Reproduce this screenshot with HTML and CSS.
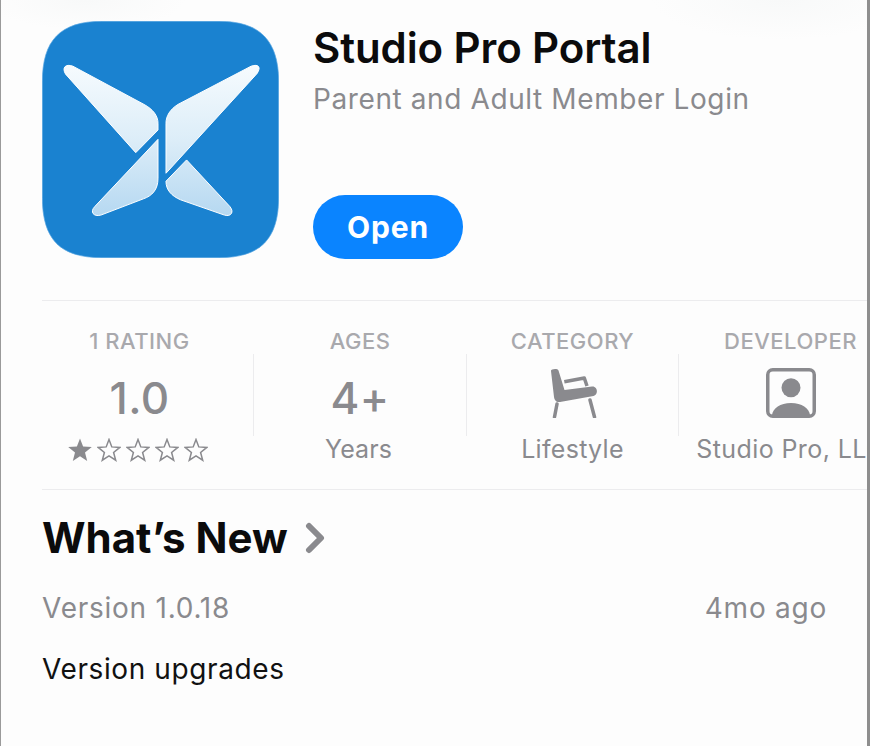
FILE: index.html
```html
<!DOCTYPE html>
<html lang="en">
<head>
<meta charset="utf-8">
<title>Studio Pro Portal</title>
<link rel="stylesheet" href="styles.css">
</head>
<body>
<main class="page">
  <header class="hero">
    <svg class="app-icon" viewBox="35 32 713 713" aria-label="App icon">
      <defs>
        <linearGradient id="wing" x1="0" y1="165" x2="0" y2="620" gradientUnits="userSpaceOnUse">
          <stop offset="0" stop-color="#f6fbfe"/>
          <stop offset="0.5" stop-color="#dcedf8"/>
          <stop offset="1" stop-color="#b5d8f1"/>
        </linearGradient>
      </defs>
      <path class="icon-tile" d="M36 215 C36 90 90 33 215 33 L568 33 C690 33 747 90 747 215 L747 562 C747 690 690 744 568 744 L215 744 C90 744 36 690 36 562 Z"/>
      <g fill="url(#wing)" stroke="#ffffff" stroke-width="3" stroke-linejoin="round">
        <path d="M106 192 C94 172 106 160 128 168 L342 283 C370 298 384 318 384 340 L384 360 L317 428 Z"/>
        <path d="M682 190 C694 172 688 160 664 168 L444 283 C420 298 408 318 408 340 L408 490 Z"/>
        <path d="M384 388 L384 505 C384 540 366 558 340 567 L212 616 C190 622 178 606 194 590 Z"/>
        <path d="M470 450 L600 590 C614 606 604 622 584 616 L452 570 C424 558 408 540 408 514 Z"/>
      </g>
    </svg>
    <div class="hero-text">
      <h1 class="title">Studio Pro Portal</h1>
      <p class="subtitle">Parent and Adult Member Login</p>
      <button class="open-btn" type="button">Open</button>
    </div>
  </header>

  <section class="stats">
    <div class="stat stat-first">
      <div class="stat-label">1 RATING</div>
      <div class="stat-value">1.0</div>
      <div class="stars">
        <svg class="star" viewBox="0 0 24 24"><path class="star-full" d="M12 0.500l3.100 8 8.700.6-6.800 5.500 2.200 8.400-7.200-4.700-7.200 4.700 2.200-8.400L.2 9.100l8.700-.6z"/></svg>
        <svg class="star" viewBox="0 0 24 24"><path class="star-empty" d="M12 1.500l2.800 7.400 8 .5-6.200 5.100 2.100 7.700-6.700-4.300-6.700 4.300 2.100-7.700-6.200-5.100 8-.5z"/></svg>
        <svg class="star" viewBox="0 0 24 24"><path class="star-empty" d="M12 1.500l2.800 7.400 8 .5-6.200 5.100 2.100 7.700-6.700-4.300-6.700 4.300 2.100-7.700-6.200-5.100 8-.5z"/></svg>
        <svg class="star" viewBox="0 0 24 24"><path class="star-empty" d="M12 1.500l2.800 7.400 8 .5-6.200 5.100 2.100 7.700-6.700-4.300-6.700 4.300 2.100-7.700-6.200-5.100 8-.5z"/></svg>
        <svg class="star" viewBox="0 0 24 24"><path class="star-empty" d="M12 1.500l2.800 7.400 8 .5-6.200 5.100 2.100 7.700-6.700-4.300-6.700 4.300 2.100-7.700-6.200-5.100 8-.5z"/></svg>
      </div>
    </div>
    <div class="stat">
      <div class="stat-label">AGES</div>
      <div class="stat-value">4+</div>
      <div class="stat-sub stat-sub-years">Years</div>
    </div>
    <div class="stat">
      <div class="stat-label">CATEGORY</div>
      <svg class="stat-icon" viewBox="0 0 50 50">
        <path class="chair-fill" d="M3 3 C2.500 1 9.500 0 10.500 2.500 L16.500 22 L44 18.500 C50 18 50.500 27 45.500 28 L12 34 C8 34.500 6.500 32 6 29 Z"/>
        <path class="chair-line" d="M16.300 13.700 L36.300 10 L39 18"/>
        <path class="chair-leg" d="M9 36 L6.500 49"/>
        <path class="chair-leg" d="M42 32 L46.500 49"/>
      </svg>
      <div class="stat-sub">Lifestyle</div>
    </div>
    <div class="stat">
      <div class="stat-label">DEVELOPER</div>
      <svg class="stat-icon" viewBox="0 0 50 50">
        <rect class="dev-frame" x="1.750" y="1.750" width="46.500" height="46.500" rx="5"/>
        <circle class="dev-fill" cx="25" cy="19.700" r="9.500"/>
        <path class="dev-fill" d="M6 47 C7 40 14 35 25 35 C36 35 43 40 44 47 Z"/>
      </svg>
      <div class="stat-sub stat-sub-wide">Studio Pro, LLC</div>
    </div>
  </section>

  <section class="whats-new">
    <h2 class="section-title">What’s New
      <svg class="chevron" viewBox="0 0 20 32"><path d="M4 4 L16 16 L4 28"/></svg>
    </h2>
    <div class="version-row">
      <span>Version 1.0.18</span>
      <span>4mo ago</span>
    </div>
    <p class="notes">Version upgrades</p>
  </section>
</main>
</body>
</html>
```
FILE: styles.css
```css
html, body {
  margin: 0;
  padding: 0;
  height: 100%;
}
body {
  background: #fdfdfd;
  font-family: Inter, "Liberation Sans", sans-serif;
  overflow: hidden;
}
.page {
  box-sizing: border-box;
  width: 870px;
  height: 746px;
  border-left: 1px solid #9a9a9a;
  border-right: 3px solid #8e8e8e;
  padding: 21px 0 0 41px;
  overflow: hidden;
  background:
    radial-gradient(ellipse 130px 40px at 780px 0, #f8f9f9, rgba(248, 249, 249, 0)),
    radial-gradient(ellipse 100px 30px at 85px 0, #f8f9f9, rgba(248, 249, 249, 0)),
    #fdfdfd;
}
.hero {
  display: flex;
  gap: 34px;
  height: 279px;
}
.app-icon {
  width: 237px;
  height: 237px;
  flex: none;
}
.icon-tile {
  fill: #1a82d0;
  stroke: #5ba8e2;
  stroke-width: 2;
}
.hero-text {
  display: flex;
  flex-direction: column;
  align-items: flex-start;
}
.title {
  margin: 1px 0 0;
  font-size: 42px;
  line-height: 52px;
  font-weight: 600;
  color: #0b0b0c;
  letter-spacing: -0.1px;
}
.subtitle {
  margin: 0;
  font-size: 28px;
  line-height: 51px;
  font-weight: 400;
  color: #8a8a8e;
  letter-spacing: 0.6px;
}
.open-btn {
  margin-top: 70px;
  width: 150px;
  height: 64px;
  border: 0;
  border-radius: 32px;
  background: #0a84ff;
  color: #fff;
  font: 700 30px Inter, "Liberation Sans", sans-serif;
  letter-spacing: 0.8px;
}
.stats {
  display: grid;
  grid-template-columns: 211px 213px 212px 224px;
  height: 190px;
  box-sizing: border-box;
  border-top: 1px solid #ececee;
  border-bottom: 1px solid #ececee;
  padding-top: 53px;
}
.stat {
  display: flex;
  flex-direction: column;
  align-items: center;
  height: 82px;
  border-left: 1px solid #ececee;
}
.stat-first {
  border-left: 0;
  margin-left: -16px;
}
.stat-label {
  flex: none;
  margin-top: -27px;
  font-size: 22px;
  line-height: 28px;
  font-weight: 500;
  letter-spacing: 0.5px;
  color: #a9a9ad;
  white-space: nowrap;
}
.stat-value {
  flex: none;
  margin-top: 16px;
  font-size: 44px;
  line-height: 54px;
  font-weight: 500;
  letter-spacing: 0.4px;
  color: #8a8a8e;
}
.stat-sub {
  flex: none;
  margin-top: 8px;
  font-size: 25px;
  line-height: 32px;
  letter-spacing: 0.3px;
  color: #8a8a8e;
  white-space: nowrap;
}
.stat-sub-years {
  margin-right: 3px;
  letter-spacing: 0.1px;
}
.stat-sub-wide {
  letter-spacing: 0.4px;
}
.stat-icon {
  flex: none;
  margin-top: 13px;
  width: 50px;
  height: 50px;
  margin-bottom: 7px;
}
.stars {
  flex: none;
  display: flex;
  gap: 5px;
  margin-top: 13px;
  margin-right: 3px;
}
.star {
  width: 24px;
  height: 24px;
}
.star-full {
  fill: #8a8a8e;
}
.star-empty {
  fill: none;
  stroke: #8a8a8e;
  stroke-width: 1.500;
}
.chair-fill, .dev-fill {
  fill: #8a8a8e;
}
.chair-line {
  fill: none;
  stroke: #8a8a8e;
  stroke-width: 3.500;
  stroke-linejoin: round;
}
.chair-leg {
  fill: none;
  stroke: #8a8a8e;
  stroke-width: 3.500;
  stroke-linecap: round;
}
.dev-frame {
  fill: none;
  stroke: #8a8a8e;
  stroke-width: 3.500;
}
.whats-new {
  padding-right: 40px;
}
.section-title {
  display: flex;
  align-items: center;
  gap: 17px;
  margin: 20px 0 0;
  font-size: 42px;
  line-height: 56px;
  font-weight: 700;
  color: #0b0b0c;
}
.chevron {
  width: 20px;
  height: 32px;
  fill: none;
  stroke: #8a8a8e;
  stroke-width: 6;
  stroke-linecap: round;
  stroke-linejoin: round;
}
.version-row {
  display: flex;
  justify-content: space-between;
  margin-top: 24px;
  font-size: 28px;
  line-height: 36px;
  letter-spacing: 0.75px;
  color: #8a8a8e;
}
.notes {
  margin: 25px 0 0;
  font-size: 28px;
  line-height: 36px;
  letter-spacing: 0.6px;
  color: #111;
}
```
